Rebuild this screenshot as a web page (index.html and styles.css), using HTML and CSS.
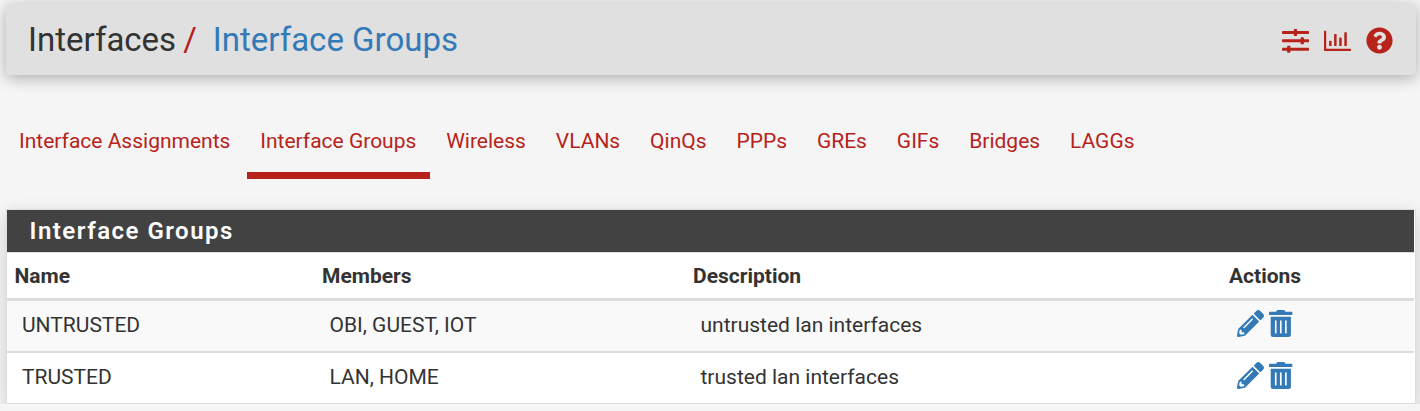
FILE: index.html
```html
<!DOCTYPE html>
<html lang="en">
    <head>
        <meta charset="UTF-8">
        <meta name="viewport" content="width=device-width, initial-scale=1.0">
        <title>Interfaces: Interface Groups</title>
        <link rel="stylesheet" href="styles.css">
    </head>
    <body>
        <svg class="sprite">
            <symbol id="pencil" viewBox="0 0 512 512">
                <path d="M497.9 142.1l-46.1 46.1c-4.7 4.7-12.3 4.7-17 0l-111-111c-4.7-4.7-4.7-12.3 0-17l46.1-46.1c18.7-18.7 49.1-18.7 67.9 0l60.1 60.1c18.8 18.7 18.8 49.1 0 67.9zM284.2 99.8L21.6 362.4.4 483.9c-2.9 16.4 11.4 30.6 27.8 27.8l121.5-21.3 262.6-262.6c4.7-4.7 4.7-12.3 0-17l-111-111c-4.8-4.7-12.4-4.7-17.1 0zM124.1 339.9c-5.5-5.5-5.5-14.3 0-19.8l154-154c5.5-5.5 14.3-5.5 19.8 0s5.5 14.3 0 19.8l-154 154c-5.5 5.5-14.3 5.5-19.8 0zM88 424h48v36.3l-64.5 11.3-31.1-31.1L51.7 376H88v48z"/>
            </symbol>
            <symbol id="trash" viewBox="0 0 448 512">
                <path d="M32 464a48 48 0 0 0 48 48h288a48 48 0 0 0 48-48V128H32zm272-256a16 16 0 0 1 32 0v224a16 16 0 0 1-32 0zm-96 0a16 16 0 0 1 32 0v224a16 16 0 0 1-32 0zm-96 0a16 16 0 0 1 32 0v224a16 16 0 0 1-32 0zM432 32H312l-9.4-18.7A24 24 0 0 0 281.1 0H166.8a23.72 23.72 0 0 0-21.4 13.3L136 32H16A16 16 0 0 0 0 48v32a16 16 0 0 0 16 16h416a16 16 0 0 0 16-16V48a16 16 0 0 0-16-16z"/>
            </symbol>
        </svg>

        <header class="header">
            <h1 class="breadcrumb">
                <span>Interfaces</span>
                <span class="slash">/</span>
                <a href="#">Interface Groups</a>
            </h1>
            <div class="shortcuts">
                <a href="#" title="Settings">
                    <svg class="icon" viewBox="0 0 27 27">
                        <rect y="4" width="27" height="3" rx=".7"/>
                        <rect y="12.3" width="27" height="3" rx=".7"/>
                        <rect y="20.7" width="27" height="3" rx=".7"/>
                        <rect x="11.8" y="2" width="3.3" height="7" rx=".8"/>
                        <rect x="18.6" y="10.3" width="3.3" height="7" rx=".8"/>
                        <rect x="5.1" y="18.7" width="3.3" height="7" rx=".8"/>
                    </svg>
                </a>
                <a href="#" title="Status">
                    <svg class="icon" viewBox="0 0 27 27">
                        <path d="M.6 3.700h1a.6.6 0 0 1 .6.6v17.400h24.200a.6.6 0 0 1 .6.6v1a.6.6 0 0 1-.6.6H.6a.6.6 0 0 1-.6-.6V4.300A.6.6 0 0 1 .6 3.700z"/>
                        <rect x="5.1" y="13.800" width="2.500" height="5.200" rx=".6"/>
                        <rect x="10.100" y="7" width="2.500" height="12" rx=".6"/>
                        <rect x="15.200" y="10.500" width="2.500" height="8.500" rx=".6"/>
                        <rect x="20.300" y="5.300" width="2.500" height="13.700" rx=".6"/>
                    </svg>
                </a>
                <a href="#" title="Help">
                    <svg class="icon" viewBox="0 0 512 512">
                        <path d="M504 256c0 136.997-111.043 248-248 248S8 392.997 8 256C8 119.083 119.043 8 256 8s248 111.083 248 248zM262.655 90c-54.497 0-89.255 22.957-116.549 63.758-3.536 5.286-2.353 12.415 2.715 16.258l34.699 26.31c5.205 3.947 12.621 3.008 16.665-2.122 17.864-22.658 30.113-35.797 57.303-35.797 20.429 0 45.698 13.148 45.698 32.958 0 14.976-12.363 22.667-32.534 33.976C247.128 238.528 216 254.941 216 296v4c0 6.627 5.373 12 12 12h56c6.627 0 12-5.373 12-12v-1.333c0-28.462 83.186-29.647 83.186-106.667 0-58.002-60.165-102-116.531-102zM256 338c-25.365 0-46 20.635-46 46 0 25.364 20.635 46 46 46s46-20.636 46-46c0-25.364-20.635-46-46-46z"/>
                    </svg>
                </a>
            </div>
        </header>

        <nav class="tabs">
            <a href="#">Interface Assignments</a>
            <a href="#" class="active">Interface Groups</a>
            <a href="#">Wireless</a>
            <a href="#">VLANs</a>
            <a href="#">QinQs</a>
            <a href="#">PPPs</a>
            <a href="#">GREs</a>
            <a href="#">GIFs</a>
            <a href="#">Bridges</a>
            <a href="#">LAGGs</a>
        </nav>

        <section class="panel">
            <h2 class="panel-heading">Interface Groups</h2>
            <table class="table">
                <thead>
                    <tr>
                        <th class="col-name">Name</th>
                        <th class="col-members">Members</th>
                        <th class="col-descr">Description</th>
                        <th>Actions</th>
                    </tr>
                </thead>
                <tbody>
                    <tr>
                        <td>UNTRUSTED</td>
                        <td>OBI, GUEST, IOT</td>
                        <td>untrusted lan interfaces</td>
                        <td>
                            <div class="actions">
                                <a href="#" title="Edit group"><svg class="icon"><use href="#pencil"/></svg></a>
                                <a href="#" title="Delete group"><svg class="icon icon-trash"><use href="#trash"/></svg></a>
                            </div>
                        </td>
                    </tr>
                    <tr>
                        <td>TRUSTED</td>
                        <td>LAN, HOME</td>
                        <td>trusted lan interfaces</td>
                        <td>
                            <div class="actions">
                                <a href="#" title="Edit group"><svg class="icon"><use href="#pencil"/></svg></a>
                                <a href="#" title="Delete group"><svg class="icon icon-trash"><use href="#trash"/></svg></a>
                            </div>
                        </td>
                    </tr>
                </tbody>
            </table>
        </section>
    </body>
</html>
```
FILE: styles.css
```css
* {
    box-sizing: border-box;
}

body {
    font-family: Roboto, 'Liberation Sans', sans-serif;
    font-size: 21px;
    line-height: 30px;
    color: #333;
    background-color: #f5f5f5;
    margin: 0;
    padding: 4px 4px 0 6px;
    overflow: hidden;
}

a {
    color: #337ab7;
    text-decoration: none;
}

.sprite {
    display: none;
}

.icon {
    display: block;
    width: 27px;
    height: 27px;
    fill: currentColor;
}

.icon-trash {
    width: 23.6px;
}

.header {
    display: flex;
    align-items: center;
    justify-content: space-between;
    height: 71px;
    padding: 0 23px 0 22px;
    background-color: #e0e0e0;
    border-radius: 4px;
    box-shadow: 0 3px 15px rgba(0, 0, 0, 0.3);
}

.breadcrumb {
    display: flex;
    margin: 0;
    padding-top: 1px;
    font-size: 33px;
    font-weight: 400;
}

.slash {
    color: #b71c1c;
    margin: 0 16px 0 7px;
}

.shortcuts {
    display: flex;
    gap: 15px;
    padding-top: 2px;
}

.shortcuts a {
    color: #b7231a;
}

.tabs {
    display: flex;
    gap: 3px;
    height: 76px;
    margin-top: 28px;
}

.tabs a {
    padding: 23px 13.9px 0 13px;
    color: #b7231a;
    border-bottom: 7px solid transparent;
}

.tabs .active {
    border-bottom-color: #b7231a;
}

.panel {
    margin-top: 30px;
    padding-right: 1px;
    background-color: #fff;
    border: 1px solid #ddd;
    box-shadow: 0 6px 18px rgba(0, 0, 0, 0.16);
}

.panel-heading {
    height: 42px;
    margin: 0;
    padding-left: 22.5px;
    color: #fff;
    background-color: #424242;
    font-size: 24px;
    font-weight: 600;
    line-height: 42px;
    letter-spacing: 1.5px;
}

.table {
    width: 100%;
    table-layout: fixed;
    border-collapse: separate;
    border-spacing: 0;
    border-top: 1px solid #ddd;
}

.table th {
    height: 48px;
    padding: 0 7.5px;
    text-align: left;
    font-weight: 700;
    border-bottom: 3px solid #ddd;
}

.table td {
    height: 50px;
    padding: 0 15px 2px;
}

.table tbody tr:first-child td {
    height: 52px;
    background-color: #f9f9f9;
    border-bottom: 2px solid #ddd;
}

.col-name {
    width: 307.5px;
}

.col-members {
    width: 371px;
}

.col-descr {
    width: 536px;
}

.actions {
    display: flex;
    gap: 5.5px;
    padding-bottom: 3px;
}
```
